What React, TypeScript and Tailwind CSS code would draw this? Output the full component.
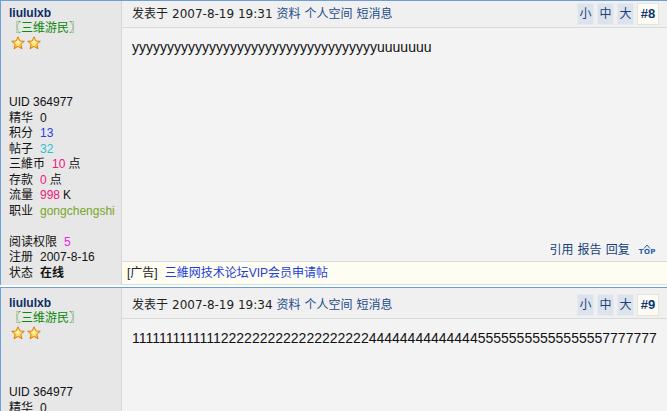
const LATIN = "font-['Liberation_Sans','Noto_Sans_CJK_SC',sans-serif]";
const DATE = "font-['DejaVu_Sans','Noto_Sans_CJK_SC',sans-serif]";

function Star() {
  return (
    <svg width="14" height="14" viewBox="0 0 14 14">
      <defs>
        <radialGradient id="sg" cx="50%" cy="45%" r="60%">
          <stop offset="0%" stopColor="#fffbd0" />
          <stop offset="55%" stopColor="#ffd23a" />
          <stop offset="100%" stopColor="#f29a10" />
        </radialGradient>
      </defs>
      <polygon
        points="7,0.8 8.9,5 13.3,5.3 9.9,8.2 11,12.8 7,10.4 3,12.8 4.1,8.2 0.7,5.3 5.1,5"
        fill="url(#sg)"
        stroke="#d9770a"
        strokeWidth="0.9"
        strokeLinejoin="round"
      />
    </svg>
  );
}

function InfoRow({
  label,
  value,
  unit,
  color,
  bold,
}: {
  label: string;
  value: string;
  unit?: string;
  color?: string;
  bold?: boolean;
}) {
  return (
    <div className="flex items-baseline whitespace-nowrap">
      <span>{label}</span>
      <span className={`ml-[7px] ${color ?? ""} ${bold ? "font-bold" : ""}`}>{value}</span>
      {unit && <span className="ml-[3px]">{unit}</span>}
    </div>
  );
}

function Profile({ first }: { first: boolean }) {
  return (
    <div
      className={`w-[121px] shrink-0 bg-[#e7e7e7] border-r border-[#d6d6d6] pl-[8px] ${
        first ? "pt-[5px]" : "pt-[8px]"
      } text-[12px] text-[#111] ${LATIN}`}
    >
      <div className="font-bold leading-[15px] text-[#0c2d63]">liululxb</div>
      <div className="leading-[14px] text-[#0a8a0a]">〖三维游民〗</div>
      <div className="flex gap-[2px] pl-[2px] mt-[1px]">
        <Star />
        <Star />
      </div>
      <div className="mt-[45px] leading-[15.5px]">
        <div className="whitespace-nowrap">UID 364977</div>
        <InfoRow label="精华" value="0" />
        <InfoRow label="积分" value="13" color="text-[#1f3ff0]" />
        <InfoRow label="帖子" value="32" color="text-[#2bc0cc]" />
        <InfoRow label="三維币" value="10" unit="点" color="text-[#f0157f]" />
        <InfoRow label="存款" value="0" unit="点" color="text-[#f0157f]" />
        <InfoRow label="流量" value="998" unit="K" color="text-[#f0157f]" />
        <InfoRow label="职业" value="gongchengshi" color="text-[#7aa528]" />
        <div className="h-[15.5px]" />
        <InfoRow label="阅读权限" value="5" color="text-[#e81ee8]" />
        <InfoRow label="注册" value="2007-8-16" />
        <InfoRow label="状态" value="在线" bold />
      </div>
    </div>
  );
}

function PostHeader({ first, time, floor }: { first: boolean; time: string; floor: string }) {
  return (
    <div
      className={`flex items-center border-b border-[#d9d9d9] bg-[#f0f0f0] pl-[10px] pr-[8px] ${
        first ? "h-[27px]" : "h-[31px] pt-[3px]"
      } text-[12px] ${LATIN}`}
    >
      <div className="flex items-center gap-[4px] text-[#222] whitespace-nowrap">
        <span>发表于</span>
        <span className={DATE}>{time}</span>
        <span className="text-[#1b4a8c]">资料</span>
        <span className="text-[#1b4a8c]">个人空间</span>
        <span className="text-[#1b4a8c]">短消息</span>
      </div>
      <div className="ml-auto flex items-center gap-[3px]">
        {["小", "中", "大"].map((s) => (
          <span
            key={s}
            className="w-[17px] h-[22px] flex items-center justify-center bg-[#dde3ed] border border-[#e6ebf3] text-[#1c3f78]"
          >
            {s}
          </span>
        ))}
        <span className="w-[22px] h-[22px] flex items-center justify-center bg-[#fcfcf4] border border-[#e4e4dc] font-bold text-[13px] text-[#0e3472]">
          {floor}
        </span>
      </div>
    </div>
  );
}

function TopIcon() {
  return (
    <span className="flex flex-col items-center leading-none text-[#2a5fa8] ml-[9px]">
      <svg width="8" height="5" viewBox="0 0 8 5">
        <polyline points="1,4.5 4,1 7,4.5" fill="none" stroke="#2a5fa8" strokeWidth="1" />
      </svg>
      <span className="text-[7px] font-bold tracking-[0.5px] font-['DejaVu_Sans',sans-serif]">TOP</span>
    </span>
  );
}

function Post({
  first,
  time,
  floor,
  body,
}: {
  first: boolean;
  time: string;
  floor: string;
  body: string;
}) {
  return (
    <div
      className={`flex border-l border-t border-[#6d9ed8] bg-[#f3f3f3] ${
        first ? "h-[285px]" : "h-[124px] mt-[2px]"
      }`}
    >
      <Profile first={first} />
      <div className="flex-1 flex flex-col min-w-0">
        <PostHeader first={first} time={time} floor={floor} />
        <div
          className={`flex-1 pl-[10px] pt-[10px] text-[14px] leading-[18px] text-[#111] whitespace-nowrap overflow-hidden ${LATIN}`}
        >
          {body}
        </div>
        {first && (
          <>
            <div className={`h-[22px] flex items-center justify-end pr-[11px] text-[12px] text-[#173f7c] ${LATIN}`}>
              <span className="flex gap-[4px]">
                <span>引用</span>
                <span>报告</span>
                <span>回复</span>
              </span>
              <TopIcon />
            </div>
            <div
              className={`h-[24px] flex items-center border-t border-[#dcdcdc] border-b border-b-[#d4dde8] bg-[#fdfdf2] pl-[5px] text-[12px] ${LATIN}`}
            >
              <span className="text-[#222]">[广告]</span>
              <span className="ml-[7px] text-[#1e3edb]">三維网技术论坛VIP会员申请帖</span>
            </div>
          </>
        )}
      </div>
    </div>
  );
}

export default function App() {
  return (
    <div className="w-[667px] h-[411px] overflow-hidden bg-white">
      <Post
        first
        time="2007-8-19 19:31"
        floor="#8"
        body={"y".repeat(35) + "u".repeat(7)}
      />
      <Post
        first={false}
        time="2007-8-19 19:34"
        floor="#9"
        body={"1".repeat(13) + "2".repeat(19) + "4".repeat(14) + "5".repeat(16) + "7".repeat(7)}
      />
    </div>
  );
}
